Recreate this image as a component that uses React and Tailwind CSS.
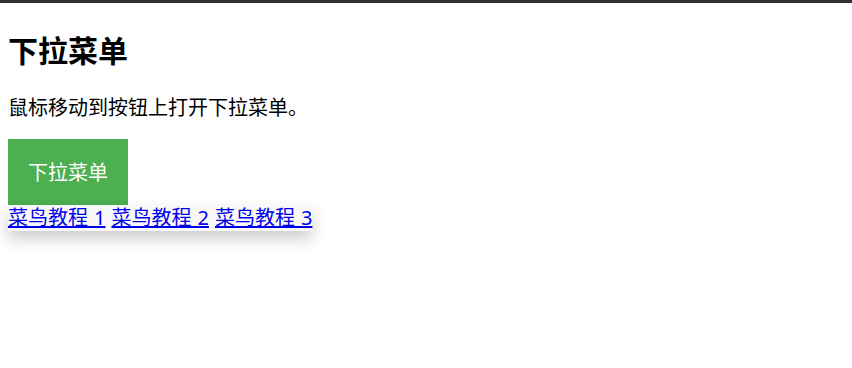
import React from "react";

export default function App() {
  const font = { fontFamily: '"Noto Sans CJK SC", "Noto Sans", sans-serif' };
  const linkFont = { fontFamily: '"Noto Sans", "Noto Sans CJK SC", sans-serif' };
  return (
    <div className="min-h-[368px] bg-white text-black" style={font}>
      <div className="h-[3px] bg-[#333333]" />
      <div className="px-2">
        <h2 className="mt-[26px] text-[30px] font-bold leading-[40px]">下拉菜单</h2>
        <p className="mt-[25px] text-[20px] leading-[26px]">鼠标移动到按钮上打开下拉菜单。</p>
        <div className="relative mt-[19px] inline-block">
          <button className="block h-[66px] w-[120px] bg-[#4caf50] text-[20px] leading-[26px] text-white">
            下拉菜单
          </button>
          <div
            className="absolute left-0 top-[66px] h-[26px] whitespace-nowrap bg-[#f9f9f9] text-[20px] leading-[26px] [word-spacing:0.8px] shadow-[0px_8px_16px_0px_rgba(0,0,0,0.2)]"
            style={linkFont}
          >
            <a href="#" className="text-[#0000ee] underline">菜鸟教程 1</a>{" "}
            <a href="#" className="text-[#0000ee] underline">菜鸟教程 2</a>{" "}
            <a href="#" className="text-[#0000ee] underline">菜鸟教程 3</a>
          </div>
        </div>
      </div>
    </div>
  );
}
